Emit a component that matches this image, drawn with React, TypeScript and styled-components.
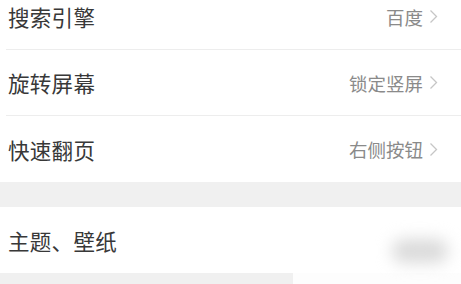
import React from 'react';
import styled, { createGlobalStyle } from 'styled-components';

const GlobalStyle = createGlobalStyle`
  html, body {
    margin: 0;
    padding: 0;
    background: #ffffff;
    overflow: hidden;
  }
  body {
    font-family: "Noto Sans CJK SC", "Noto Sans", sans-serif;
  }
`;

const Page = styled.div`
  width: 461px;
  height: 284px;
  overflow: hidden;
  background: #ffffff;
`;

const Group = styled.div<{ $offset?: number }>`
  display: flex;
  flex-direction: column;
  margin-top: ${(p) => p.$offset ?? 0}px;
  background: #ffffff;
`;

const Row = styled.div<{ $divider?: boolean }>`
  display: flex;
  align-items: center;
  justify-content: space-between;
  height: 66px;
  padding: 0 23px 0 8px;
  box-sizing: border-box;
  border-bottom: ${(p) => (p.$divider ? '1px solid #ededed' : 'none')};
  margin-left: ${(p) => (p.$divider ? '6px' : '0')};
  padding-left: ${(p) => (p.$divider ? '2px' : '8px')};
`;

const Title = styled.span`
  font-size: 21.5px;
  color: #383838;
  letter-spacing: 0.3px;
`;

const Value = styled.span`
  display: flex;
  align-items: center;
  gap: 6px;
  font-size: 18.5px;
  color: #8a8a8a;
`;

const Band = styled.div<{ $height: number; $cut?: number }>`
  height: ${(p) => p.$height}px;
  background: ${(p) =>
    p.$cut
      ? `linear-gradient(to right, #f0f0f0 ${p.$cut}px, #fdfdfd ${p.$cut}px)`
      : '#f0f0f0'};
`;

const Smudge = styled.div`
  width: 56px;
  height: 24px;
  margin-top: 22px;
  margin-right: -10px;
  border-radius: 12px;
  background: #dadada;
  filter: blur(8px);
`;

const Chevron: React.FC = () => (
  <svg width="9" height="15" viewBox="0 0 9 15" fill="none">
    <polyline points="1.5,1.5 7.5,7.5 1.5,13.5" stroke="#c6c6c6" strokeWidth="1.3" />
  </svg>
);

const settings = [
  { title: '搜索引擎', value: '百度' },
  { title: '旋转屏幕', value: '锁定竖屏' },
  { title: '快速翻页', value: '右侧按钮' },
];

const App: React.FC = () => {
  return (
    <Page>
      <GlobalStyle />
      <Group $offset={-16}>
        {settings.map((s, i) => (
          <Row key={s.title} $divider={i < settings.length - 1}>
            <Title>{s.title}</Title>
            <Value>
              {s.value}
              <Chevron />
            </Value>
          </Row>
        ))}
      </Group>
      <Band $height={25} />
      <Group>
        <Row>
          <Title>主题、壁纸</Title>
          <Smudge />
        </Row>
      </Group>
      <Band $height={20} $cut={293} />
    </Page>
  );
};

export default App;
